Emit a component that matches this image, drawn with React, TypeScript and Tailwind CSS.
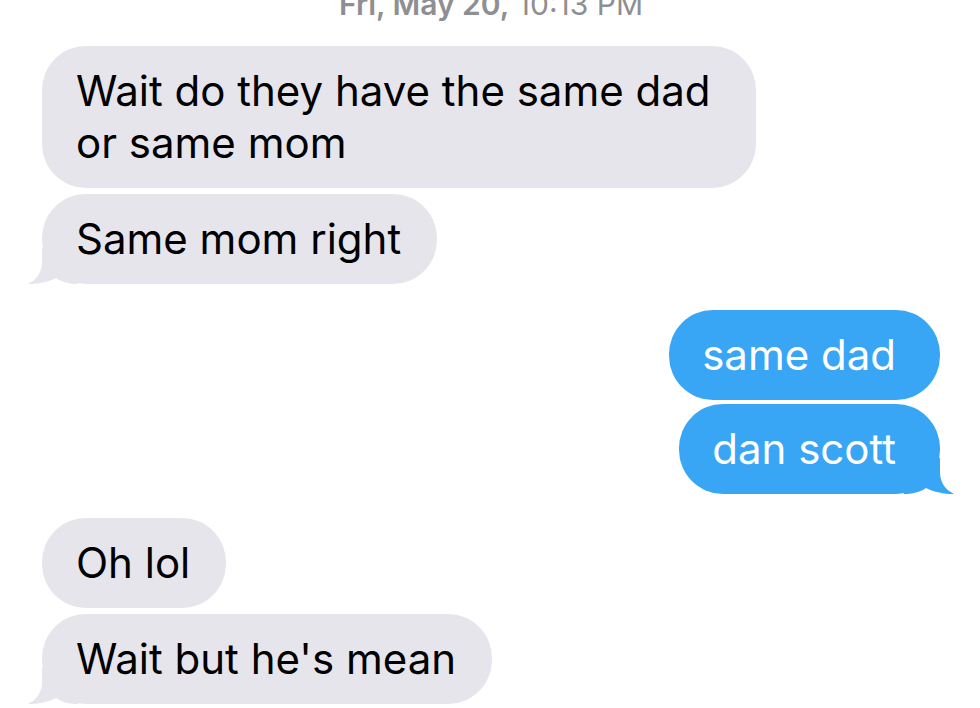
import React from "react";

type Msg = { text: string; me?: boolean; tail?: boolean; gap: string };

const msgs: Msg[] = [
  { text: "Wait do they have the same dad or same mom", gap: "mt-[27px]" },
  { text: "Same mom right", tail: true, gap: "mt-[6px]" },
  { text: "same dad", me: true, gap: "mt-[26px]" },
  { text: "dan scott", me: true, tail: true, gap: "mt-[4px]" },
  { text: "Oh lol", gap: "mt-[24px]" },
  { text: "Wait but he's mean", tail: true, gap: "mt-[6px]" },
];

function Tail({ me }: { me?: boolean }) {
  const color = me ? "#38a6f5" : "#e6e5eb";
  return (
    <svg
      width="50"
      height="36"
      viewBox="0 0 50 36"
      className={`absolute bottom-0 ${me ? "right-[-14px] -scale-x-100" : "left-[-14px]"}`}
    >
      <path
        d="M14 0 L14 14 C14 25 8 32 0 36 C10 36 20 34 28 30 C34 34 42 36 50 36 L50 0 Z"
        fill={color}
      />
    </svg>
  );
}

function Bubble({ m }: { m: Msg }) {
  return (
    <div className={`flex ${m.me ? "justify-end" : "justify-start"} ${m.gap}`}>
      <div
        className={`relative max-w-[714px] rounded-[44px] py-[19px] text-[42px] leading-[52px] ${
          m.me ? "bg-[#38a6f5] pl-[33px] pr-[44px] text-white" : "bg-[#e6e5eb] pl-[34px] pr-[36px] text-black"
        }`}
      >
        {m.tail && <Tail me={m.me} />}
        <span className="relative">{m.text}</span>
      </div>
    </div>
  );
}

export default function App() {
  return (
    <div
      className="h-[708px] w-[980px] overflow-hidden bg-white pl-[42px] pr-[40px]"
      style={{ fontFamily: "Inter, 'Liberation Sans', sans-serif" }}
    >
      <div className="mt-[-11px] h-[30px] text-center text-[30px] leading-[30px] text-[#8e8e93]">
        <span className="font-semibold">Fri, May 20,</span> 10:13 PM
      </div>
      {msgs.map((m, i) => (
        <Bubble key={i} m={m} />
      ))}
    </div>
  );
}
